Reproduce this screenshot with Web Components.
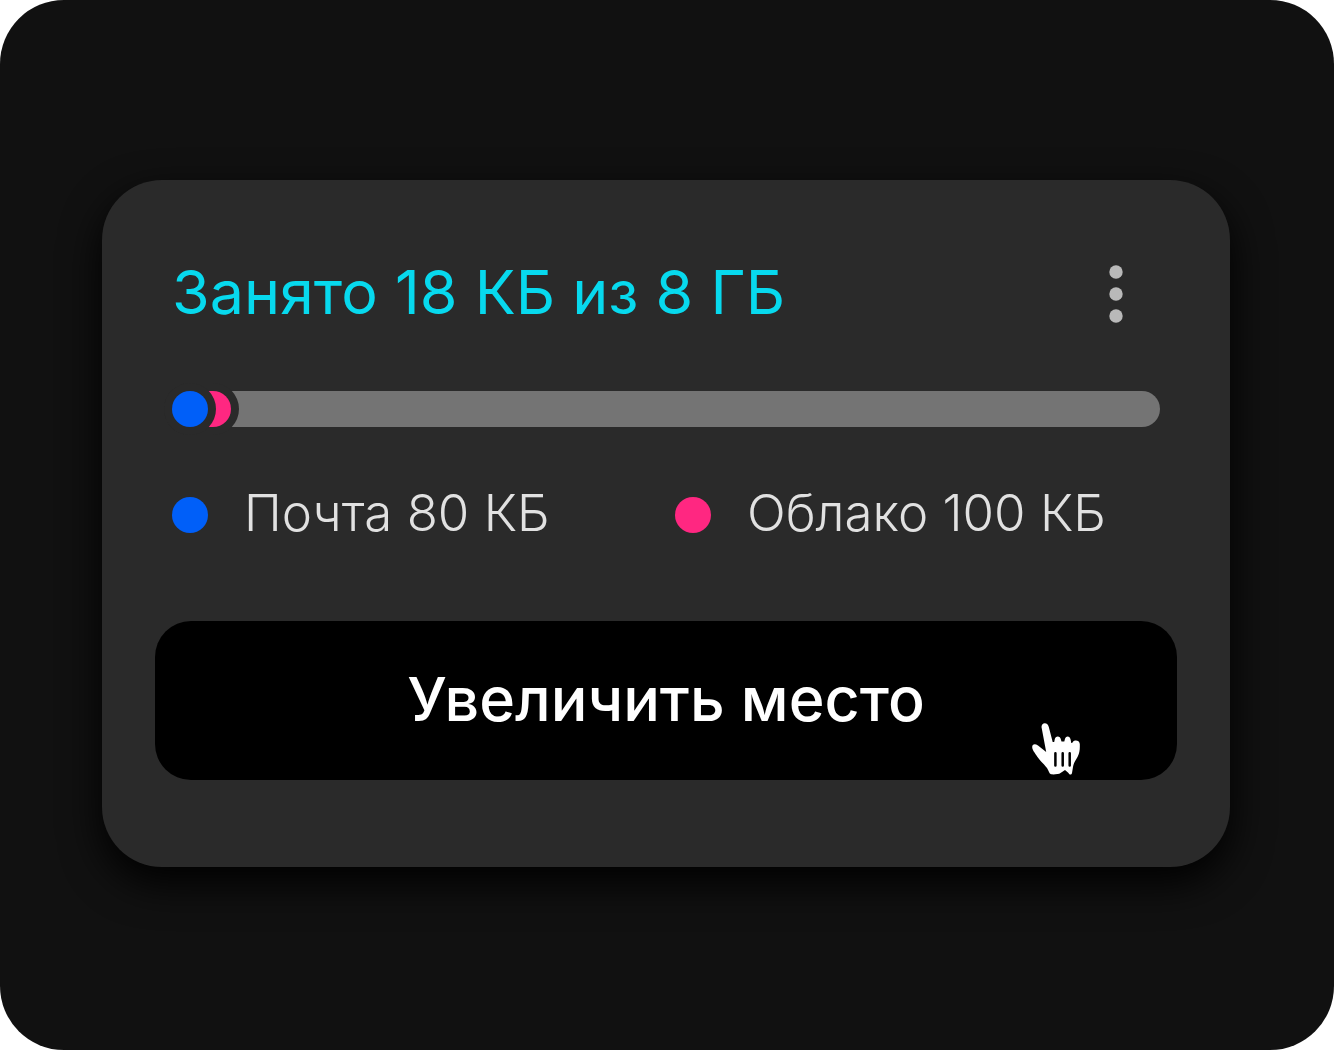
<!DOCTYPE html>
<html lang="ru">
<head>
<meta charset="utf-8">
<title>Хранилище</title>
<style>
  body { margin: 0; background: #fff; font-family: Inter, "Noto Sans", sans-serif; }
</style>
</head>
<body>
<storage-stage>
  <storage-card>
    <span slot="title">Занято 18 КБ из 8 ГБ</span>
    <usage-bar slot="bar"></usage-bar>
    <legend-item slot="legend" style="--dot:#005ff9">Почта 80 КБ</legend-item>
    <legend-item slot="legend" style="--dot:#ff2781">Облако 100 КБ</legend-item>
    <upgrade-button slot="action">Увеличить место</upgrade-button>
  </storage-card>
</storage-stage>
<script>
const define = (name, html) => customElements.define(name, class extends HTMLElement {
  constructor() {
    super();
    this.attachShadow({ mode: "open" }).innerHTML = html;
  }
});

define("storage-stage", `
  <style>
    :host { display: flex; flex-direction: column; justify-content: center; box-sizing: border-box;
      min-height: 100vh; padding: 0 104px 3px 102px; border-radius: 64px; background: #111; }
  </style>
  <slot></slot>`);

define("storage-card", `
  <style>
    :host { display: flex; flex-direction: column; padding: 72px 53px 87px; border-radius: 60px;
      background: #2a2a2a; box-shadow: 0 16px 40px #000; }
    header { display: flex; align-items: center; justify-content: space-between; padding: 0 17px; }
    h1 { margin: 0; padding-bottom: 4px; font-size: 61px; line-height: 80px; font-weight: 400; color: #07d9ee; white-space: nowrap; }
    button { display: flex; padding: 12px; margin: 0 20px 0 0; border: 0; background: none; }
    .bar { padding: 55px 17px 0; }
    .legend { display: grid; grid-template-columns: 1fr 1fr; gap: 18px; padding: 56px 17px 74px; }
  </style>
  <header>
    <h1><slot name="title"></slot></h1>
    <button type="button" aria-label="Меню">
      <svg width="24" height="60" viewBox="0 0 24 60" fill="#b9b9b9" aria-hidden="true">
        <circle cx="12" cy="8" r="6.7"/><circle cx="12" cy="30" r="6.7"/><circle cx="12" cy="52" r="6.7"/>
      </svg>
    </button>
  </header>
  <div class="bar"><slot name="bar"></slot></div>
  <div class="legend"><slot name="legend"></slot></div>
  <slot name="action"></slot>`);

define("usage-bar", `
  <style>
    :host { display: block; }
    div { height: 36px; border-radius: 18px; }
    .track { background: #747474; }
    .cloud, .mail { box-shadow: 0 0 0 8px #2a2a2a; }
    .cloud { width: 6%; background: #ff2781; }
    .mail { width: 36px; background: #005ff9; }
  </style>
  <div class="track"><div class="cloud"><div class="mail"></div></div></div>`);

define("legend-item", `
  <style>
    :host { display: flex; align-items: center; gap: 36px; font-size: 51px; line-height: 60px;
      font-weight: 300; color: #e1e1e1; white-space: nowrap; }
    i { flex: none; width: 36px; height: 36px; border-radius: 50%; background: var(--dot); }
    span { padding-bottom: 4px; }
  </style>
  <i></i><span><slot></slot></span>`);

define("upgrade-button", `
  <style>
    :host { display: block; position: relative; }
    button { display: block; width: 100%; padding: 34px 24px 37px; border: 0; border-radius: 36px; background: #000;
      color: #fff; font: 500 61px/88px Inter, "Noto Sans", sans-serif; white-space: nowrap; }
    svg { position: absolute; right: 96px; bottom: 4px; pointer-events: none; }
  </style>
  <button type="button"><slot></slot></button>
  <svg width="50" height="54" viewBox="0 0 50 54" aria-hidden="true">
    <path fill="#fff" d="M10.500 5C10.500 2.500 12 1.200 13.700 1.200C16 1.200 17.200 2.500 17.800 5L21.700 20H23.200L23.700 17.500C24.300 13.600 29.300 13.600 29.900 17.500L30.500 19.500H33.300L33.800 17.500C34.500 13.600 38.900 13.600 39.600 17.500L40.300 21H41L41.500 20.500C43 17.500 48.500 18 48.800 22C49 28 48.500 31 46.500 35C43.500 40 42.500 42 42 45L41 51C40.500 53 38.500 53 37.500 51L34 48L29.500 51C28 52.500 22 52.500 20 52.300C18 51.500 18 49 16 46C11 40 8.500 38 6.500 35C4 31 1.200 28 1.200 25C1.200 22 4 21.500 7 23.500L15.200 30L13.500 21Z"/>
    <path stroke="#000" stroke-width="2.500" stroke-linecap="round" d="M24.400 31.300V43.600M31.700 31.300V43.600M38.700 31.300V43.600"/>
  </svg>`);
</script>
</body>
</html>
